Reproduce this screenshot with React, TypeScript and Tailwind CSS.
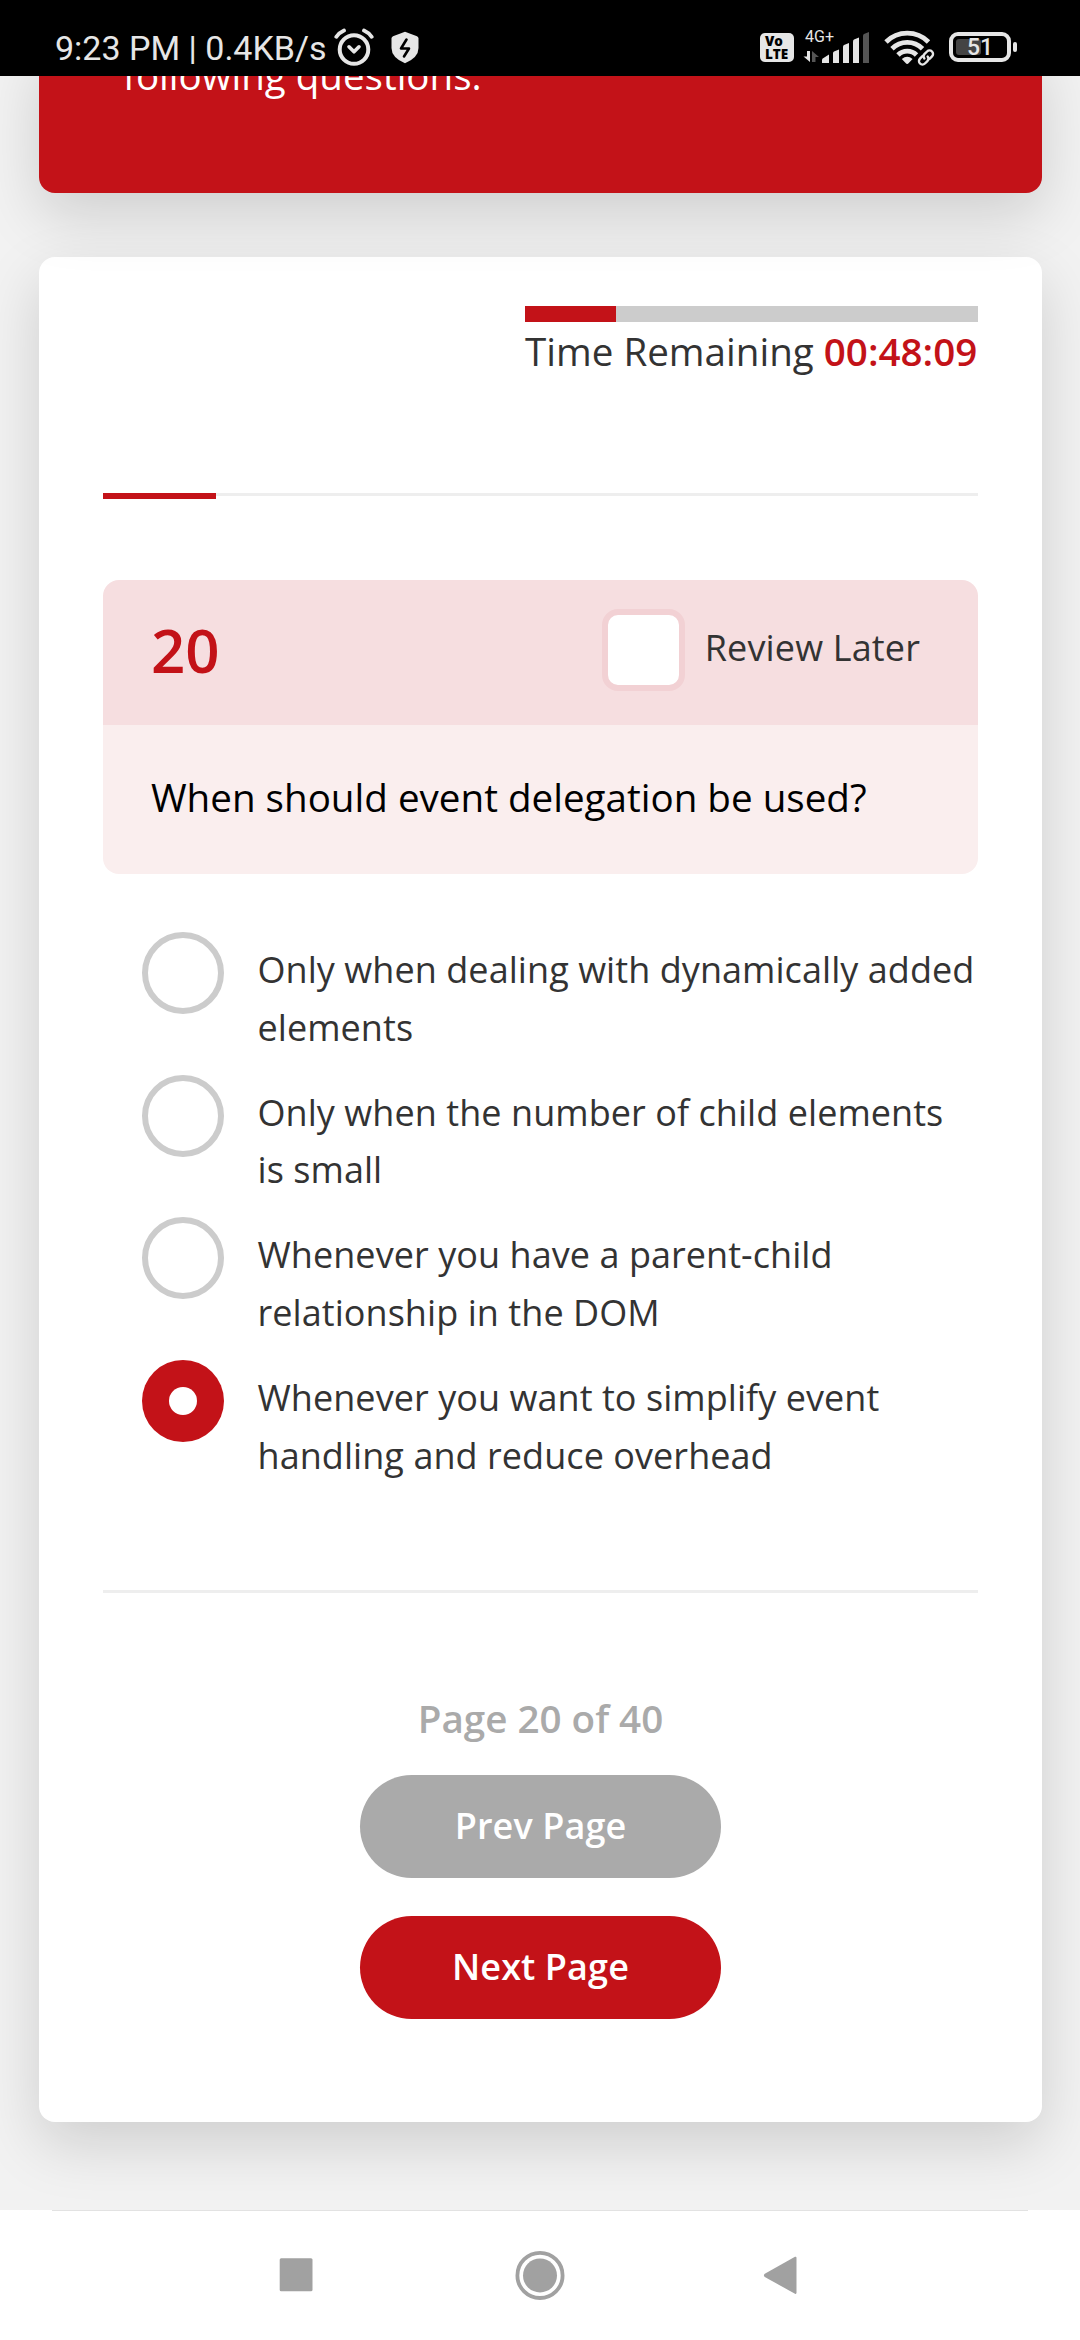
import React from "react";

const options = [
  { lines: ["Only when dealing with dynamically added", "elements"], selected: false },
  { lines: ["Only when the number of child elements", "is small"], selected: false },
  { lines: ["Whenever you have a parent-child", "relationship in the DOM"], selected: false },
  { lines: ["Whenever you want to simplify event", "handling and reduce overhead"], selected: true },
];

function AlarmIcon() {
  return (
    <svg className="ml-[8px] mt-[28px] h-[38px] w-[40px] shrink-0" viewBox="0 0 40 38" fill="none" stroke="#e6e6e6" strokeLinecap="round" strokeLinejoin="round">
      <circle cx="20" cy="21.5" r="14.3" strokeWidth="4" />
      <path d="M2.3 8.8 Q5.5 4.5 10 2.5" strokeWidth="3.8" />
      <path d="M37.7 8.8 Q34.5 4.5 30 2.5" strokeWidth="3.8" />
      <path d="M15 18.8 L20 23.8 L25 18.8" strokeWidth="3.6" />
    </svg>
  );
}

function ShieldIcon() {
  return (
    <svg className="ml-[17px] mt-[31px] h-[33px] w-[28px] shrink-0" viewBox="0 0 28 33">
      <path d="M14 0.8 L26 5.3 Q27.5 6 27.5 7.5 V17 Q27.5 26.5 14 32.3 Q0.5 26.5 0.5 17 V7.5 Q0.5 6 2 5.3 Z" fill="#e6e6e6" />
      <path d="M15.5 8.5 L10 17.5 H18 L13 25.5" fill="none" stroke="#000" strokeWidth="2.6" strokeLinejoin="round" strokeLinecap="round" />
    </svg>
  );
}

function VolteBadge() {
  return (
    <div className="mt-[33px] flex h-[29px] w-[34px] shrink-0 flex-col rounded-[5px] bg-[#e6e6e6] pl-[5px] pt-[2px] font-['Open_Sans',sans-serif] text-[13.5px] font-extrabold leading-[12.5px] text-black">
      <span className="block h-[12.5px] overflow-visible">Vo</span>
      <span className="block h-[12.5px] overflow-visible">LTE</span>
    </div>
  );
}

function Signal() {
  return (
    <div className="relative ml-[9px] mt-[28px] h-[36px] w-[67px] shrink-0">
      <span className="absolute left-[2px] top-0 font-['Roboto',sans-serif] text-[16px] leading-[17px] text-[#e6e6e6]">4G+</span>
      <svg className="h-[36px] w-[67px]" viewBox="0 0 67 36">
        <path d="M4 23 H7 V34 L0.5 28.5 H4 Z" fill="#e6e6e6" />
        <path d="M9 34 V23 L16 29 H12.5 V34 Z" fill="#555" />
        <path d="M19 35 V32 Q19 30.5 20.5 30 L26 26.5 V35 Z" fill="#e6e6e6" />
        <path d="M30 35 V25 Q30 24 31 23.5 L36 21.5 V35 Z" fill="#e6e6e6" />
        <path d="M40 35 V19 Q40 17.5 41 17 L46 15 V35 Z" fill="#e6e6e6" />
        <path d="M50 35 V13.5 Q50 12 51 11.5 L56 9.5 V35 Z" fill="#e6e6e6" />
        <path d="M60 35 V8 Q60 6.5 61 6 L66 4 V35 Z" fill="#555" />
      </svg>
    </div>
  );
}

function WifiIcon() {
  return (
    <svg className="ml-[14px] mt-[29px] h-[38px] w-[52px] shrink-0" viewBox="0 0 52 38" fill="none" stroke="#e6e6e6">
      <path d="M2 13 A30 30 0 0 1 44.5 13" strokeWidth="4.8" />
      <path d="M8 19.8 A21.5 21.5 0 0 1 38.5 19.8" strokeWidth="4.8" />
      <path d="M14 26 A13 13 0 0 1 32.5 26" strokeWidth="4.8" />
      <path d="M17.8 30 Q23.2 25.5 28.6 30 L24.8 34 Q23.2 35.8 21.6 34 Z" fill="#e6e6e6" stroke="none" />
      <g transform="rotate(-45 42 28.5)">
        <rect x="31" y="23.3" width="22" height="10.4" rx="5" fill="#000" stroke="none" />
        <path d="M40.5 25 H37 A3.5 3.5 0 0 0 37 32 H40.5 Q43.5 32 43.8 29" strokeWidth="2.4" strokeLinecap="round" />
        <path d="M43.5 32 H47 A3.5 3.5 0 0 0 47 25 H43.5 Q40.5 25 40.2 28" strokeWidth="2.4" strokeLinecap="round" />
      </g>
    </svg>
  );
}

function Battery() {
  return (
    <div className="ml-[13px] mt-[32px] flex h-[30px] shrink-0 items-center gap-[2px]">
      <div className="relative flex h-[30px] w-[62px] items-center rounded-[9px] border-4 border-[#e6e6e6] px-[3px]">
        <div className="h-[16px] w-[25px] rounded-[3px] bg-[#444]" />
        <span className="absolute left-[14px] top-[1px] font-['Roboto',sans-serif] text-[23px] font-medium leading-[22px] text-[#e6e6e6]">51</span>
      </div>
      <div className="h-[10px] w-[4px] rounded-[2px] bg-[#e6e6e6]" />
    </div>
  );
}

function StatusBar() {
  return (
    <div className="relative z-20 flex h-[76px] shrink-0 items-start bg-black pl-[55px]">
      <span className="mt-[28px] w-[271px] whitespace-nowrap font-['Roboto',sans-serif] text-[34px] leading-[40px] text-[#e6e6e6]">
        9:23 PM | 0.4KB/s
      </span>
      <AlarmIcon />
      <ShieldIcon />
      <div className="ml-auto mr-[63px] flex items-start">
        <VolteBadge />
        <Signal />
        <WifiIcon />
        <Battery />
      </div>
    </div>
  );
}

function Radio({ selected }: { selected: boolean }) {
  return selected ? (
    <div className="flex size-[82px] shrink-0 items-center justify-center rounded-full bg-[#c31218]">
      <div className="size-[28px] rounded-full bg-white" />
    </div>
  ) : (
    <div className="size-[82px] shrink-0 rounded-full border-[6px] border-[#cccccc] bg-white" />
  );
}

function NavBar() {
  return (
    <div className="relative z-20 flex h-[130px] shrink-0 flex-col bg-white">
      <div className="mx-[52px] h-px bg-[#e2e2e2]" />
      <div className="flex pl-[279px] pt-[39px]">
        <svg className="h-[50px] w-[34px]" viewBox="0 0 34 50">
          <rect x="0.7" y="8.3" width="32.8" height="33" rx="1.5" fill="#a1a1a1" />
        </svg>
        <svg className="ml-[202px] h-[50px] w-[50px]" viewBox="0 0 50 50">
          <circle cx="25" cy="25.4" r="22.6" fill="none" stroke="#a1a1a1" strokeWidth="3.8" />
          <circle cx="25" cy="25.4" r="17" fill="#a1a1a1" />
        </svg>
        <svg className="ml-[198px] h-[50px] w-[34px]" viewBox="0 0 34 50">
          <path d="M1.8 23.7 L32 6.8 Q33.5 6.2 33.5 8 V42.6 Q33.5 44.4 32 43.7 L1.8 27.1 Q0 25.4 1.8 23.7 Z" fill="#a1a1a1" />
        </svg>
      </div>
    </div>
  );
}

export default function App() {
  return (
    <div className="flex h-[2340px] w-[1080px] flex-col overflow-hidden bg-[#f2f2f2] font-['Open_Sans',sans-serif] text-[#333333]">
      <StatusBar />
      <main className="flex h-[2134px] shrink-0 flex-col overflow-hidden pl-[39px] pr-[38px]">
        <header className="relative z-10 -mt-[31px] h-[148px] shrink-0 rounded-b-[16px] bg-[#c31218] pl-[84px] shadow-[0_22px_60px_rgba(0,0,0,0.15)]">
          <p className="whitespace-nowrap text-[38.5px] leading-[61px] text-white">following questions.</p>
        </header>

        <section className="mt-[64px] flex h-[1865px] shrink-0 flex-col rounded-[16px] bg-white px-[64px] pt-[49px] shadow-[0_22px_60px_rgba(0,0,0,0.15)]">
          <div className="w-[453px] self-end">
            <div className="h-[16px] bg-[#cccccc]">
              <div className="h-full w-[91px] bg-[#c31218]" />
            </div>
            <p className="whitespace-nowrap text-[38.6px] leading-[58px]">
              Time Remaining <span className="font-semibold text-[#c31218]">00:48:09</span>
            </p>
          </div>

          <div className="mt-[113px] h-[3px] bg-[#eeeeee]">
            <div className="h-[6px] w-[113px] bg-[#c31218]" />
          </div>

          <div className="mt-[84px] overflow-hidden rounded-[16px]">
            <div className="flex h-[145px] items-start bg-[#f6dee0] pl-[48px] pr-[58px] pt-[29px]">
              <span className="text-[60px] font-semibold leading-[82px] text-[#c31218]">20</span>
              <label className="ml-auto flex items-start">
                <span className="mr-[20px] h-[82px] w-[83px] rounded-[16px] border-[6px] border-[#f2d1d4] bg-white" />
                <span className="whitespace-nowrap text-[36px] leading-[78px] tracking-[0.15px]">Review Later</span>
              </label>
            </div>
            <div className="h-[149px] bg-[#faeeee] pl-[48px] pt-[42px]">
              <p className="whitespace-nowrap text-[38.6px] leading-[60px] text-black">When should event delegation be used?</p>
            </div>
          </div>

          <ul className="mt-[58px] pl-[39px]">
            {options.map((option) => (
              <li key={option.lines[0]} className="flex h-[142.67px] items-start gap-[33.5px]">
                <Radio selected={option.selected} />
                <p className="pt-[9px] text-[36px] leading-[57.6px] tracking-[0.06px]">
                  {option.lines.map((line) => (
                    <span key={line} className="block whitespace-nowrap">{line}</span>
                  ))}
                </p>
              </li>
            ))}
          </ul>

          <div className="mt-[87px] h-[3px] bg-[#eeeeee]" />

          <div className="mt-[95px] flex flex-col items-center">
            <p className="text-[38.6px] font-semibold leading-[60px] text-[#aaaaaa]">Page 20 of 40</p>
            <button className="mt-[27px] h-[103px] w-[361px] rounded-full bg-[#aaaaaa] pb-[1px] text-[36px] font-semibold tracking-[0.1px] text-white">Prev Page</button>
            <button className="mt-[38px] h-[103px] w-[361px] rounded-full bg-[#c31218] pb-[1px] text-[36px] font-semibold tracking-[0.1px] text-white">Next Page</button>
          </div>
        </section>
      </main>
      <NavBar />
    </div>
  );
}
